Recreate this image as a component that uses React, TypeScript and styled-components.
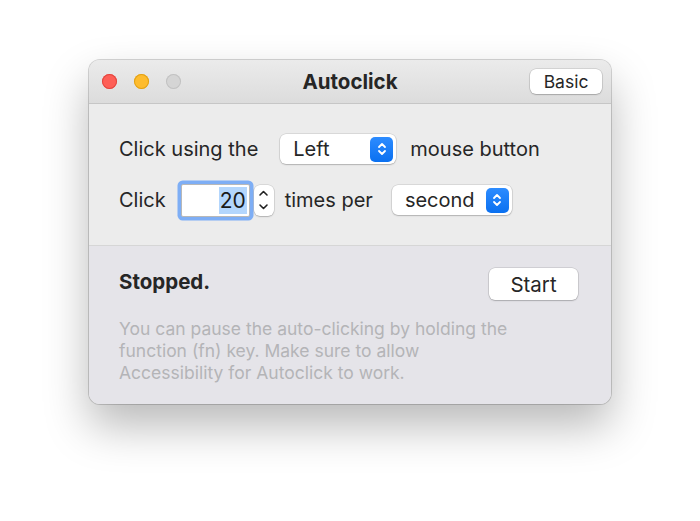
import React from "react";
import styled, { createGlobalStyle } from "styled-components";

const GlobalStyle = createGlobalStyle`
  html, body {
    margin: 0;
    background: #ffffff;
    font-family: Inter, "Liberation Sans", sans-serif;
    -webkit-font-smoothing: antialiased;
  }
`;

const Page = styled.div`
  width: 700px;
  height: 521px;
  padding: 60px 0 0 89px;
  box-sizing: border-box;
`;

const Window = styled.div`
  width: 522px;
  border-radius: 11px;
  overflow: hidden;
  background: #ececec;
  box-shadow: 0 0 0 1px rgba(0, 0, 0, 0.16), 0 22px 45px rgba(0, 0, 0, 0.28);
`;

const TitleBar = styled.div`
  height: 43px;
  display: flex;
  align-items: center;
  padding: 0 9px 0 13px;
  background: linear-gradient(#ebebeb, #dcdcdc);
  border-bottom: 1px solid #c6c6c6;
  position: relative;
`;

const Lights = styled.div`
  display: flex;
  gap: 17px;
`;

const Light = styled.span<{ $color: string; $border: string }>`
  width: 15px;
  height: 15px;
  border-radius: 50%;
  background: ${(p) => p.$color};
  box-shadow: inset 0 0 0 1px ${(p) => p.$border};
`;

const Title = styled.div`
  position: absolute;
  left: 0;
  right: 0;
  text-align: center;
  font-size: 20.5px;
  font-weight: 700;
  color: #262626;
  pointer-events: none;
`;

const Spacer = styled.div`
  flex: 1;
`;

const PushButton = styled.button<{ $w: number; $h: number; $size: number }>`
  width: ${(p) => p.$w}px;
  height: ${(p) => p.$h}px;
  border: none;
  border-radius: 6px;
  background: #ffffff;
  box-shadow: 0 0 0 0.5px rgba(0, 0, 0, 0.18), 0 1px 1.5px rgba(0, 0, 0, 0.18);
  font-family: inherit;
  font-size: ${(p) => p.$size}px;
  color: #262626;
  padding: 0;
  position: relative;
  z-index: 1;
`;

const TopSection = styled.div`
  padding: 27px 30px 27px;
  display: flex;
  flex-direction: column;
  gap: 15px;
  border-bottom: 1px solid #d6d6d6;
`;

const Row = styled.div`
  display: flex;
  align-items: center;
  height: 36px;
  font-size: 20px;
  color: #262626;
`;

const Label = styled.span<{ $ml?: number; $mr?: number }>`
  margin-left: ${(p) => p.$ml ?? 0}px;
  margin-right: ${(p) => p.$mr ?? 0}px;
`;

const Popup = styled.div<{ $w: number }>`
  width: ${(p) => p.$w}px;
  height: 30px;
  box-sizing: border-box;
  display: flex;
  align-items: center;
  justify-content: space-between;
  padding: 0 3px 0 13px;
  background: #ffffff;
  border-radius: 6px;
  box-shadow: 0 0 0 0.5px rgba(0, 0, 0, 0.16), 0 1px 1.5px rgba(0, 0, 0, 0.18);
  font-size: 20px;
`;

const PopupArrows = styled.span`
  width: 23px;
  height: 25px;
  border-radius: 5px;
  background: linear-gradient(#2d8cff, #0a70f0);
  display: flex;
  align-items: center;
  justify-content: center;
`;

const Field = styled.div`
  width: 69px;
  height: 33px;
  box-sizing: border-box;
  background: #ffffff;
  border: 1px solid #b8b8b8;
  box-shadow: 0 0 0 3.5px #7eaef5;
  border-radius: 2px;
  display: flex;
  align-items: center;
  justify-content: flex-end;
  padding-right: 2px;
  margin-left: 15px;
`;

const Selected = styled.span`
  background: #b3d6fd;
  font-size: 21px;
  line-height: 27px;
  padding: 0 1px;
  color: #1a1a1a;
`;

const Stepper = styled.div`
  width: 20px;
  height: 31px;
  margin-left: 4px;
  border-radius: 6px;
  background: #ffffff;
  box-shadow: 0 0 0 0.5px rgba(0, 0, 0, 0.16), 0 1px 1.5px rgba(0, 0, 0, 0.18);
  display: flex;
  flex-direction: column;
  align-items: center;
  justify-content: space-around;
  padding: 2px 0;
  box-sizing: border-box;
`;

const BottomSection = styled.div`
  background: #e5e4e9;
  padding: 22px 33px 20px 30px;
`;

const StatusRow = styled.div`
  display: flex;
  justify-content: space-between;
  align-items: flex-start;
`;

const Status = styled.div`
  font-size: 20.5px;
  font-weight: 700;
  color: #262626;
  margin-top: 1px;
`;

const Hint = styled.p`
  margin: 18px 0 0;
  font-size: 17.5px;
  line-height: 22px;
  color: #b4b4b7;
  width: 400px;
`;

const UpDown = () => (
  <svg width="12" height="16" viewBox="0 0 12 16" fill="none" stroke="#fff" strokeWidth="1.8" strokeLinecap="round" strokeLinejoin="round">
    <path d="M3 6 L6 3 L9 6" />
    <path d="M3 10 L6 13 L9 10" />
  </svg>
);

const Chevron = ({ up }: { up: boolean }) => (
  <svg width="11" height="8" viewBox="0 0 11 8" fill="none" stroke="#222" strokeWidth="1.6" strokeLinecap="round" strokeLinejoin="round">
    <path d={up ? "M2 6 L5.5 2.5 L9 6" : "M2 2 L5.5 5.5 L9 2"} />
  </svg>
);

export default function App() {
  return (
    <Page>
      <GlobalStyle />
      <Window>
        <TitleBar>
          <Lights>
            <Light $color="#fe5f57" $border="#e2463f" />
            <Light $color="#febc2e" $border="#e1a116" />
            <Light $color="#d5d5d5" $border="#c2c2c2" />
          </Lights>
          <Title>Autoclick</Title>
          <Spacer />
          <PushButton $w={72} $h={25} $size={17.5}>Basic</PushButton>
        </TitleBar>
        <TopSection>
          <Row>
            <Label $mr={22}>Click using the</Label>
            <Popup $w={116}>
              Left
              <PopupArrows><UpDown /></PopupArrows>
            </Popup>
            <Label $ml={14}>mouse button</Label>
          </Row>
          <Row>
            <Label>Click</Label>
            <Field>
              <Selected>20</Selected>
            </Field>
            <Stepper>
              <Chevron up />
              <Chevron up={false} />
            </Stepper>
            <Label $ml={11} $mr={19}>times per</Label>
            <Popup $w={120}>
              second
              <PopupArrows><UpDown /></PopupArrows>
            </Popup>
          </Row>
        </TopSection>
        <BottomSection>
          <StatusRow>
            <Status>Stopped.</Status>
            <PushButton $w={89} $h={32} $size={20.5}>Start</PushButton>
          </StatusRow>
          <Hint>
            You can pause the auto-clicking by holding the function (fn) key. Make sure to allow Accessibility for Autoclick to work.
          </Hint>
        </BottomSection>
      </Window>
    </Page>
  );
}
